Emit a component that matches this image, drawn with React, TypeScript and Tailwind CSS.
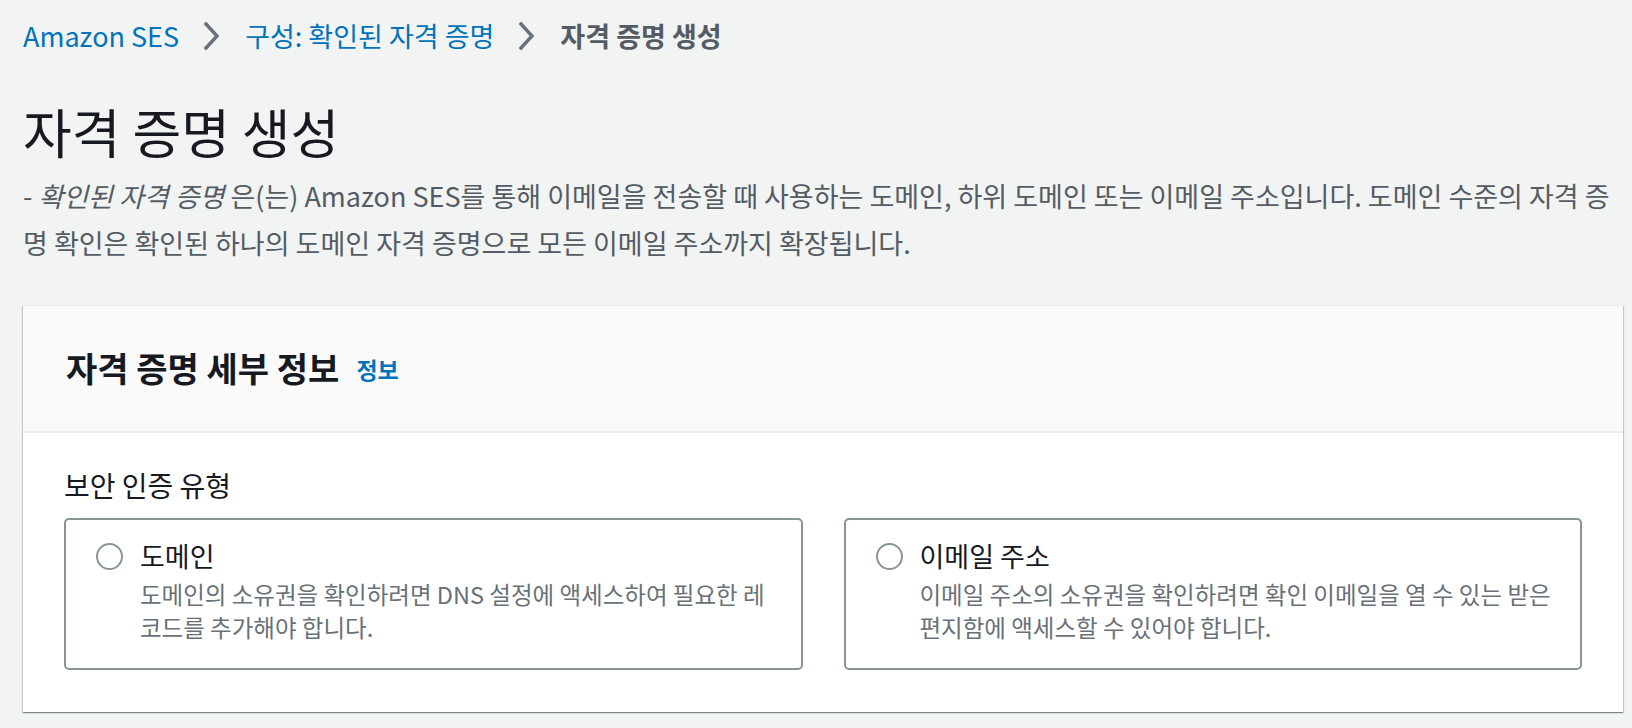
import React from "react";

const Chevron = () => (
  <svg
    width="18"
    height="30"
    viewBox="0 0 18 30"
    fill="none"
    stroke="#687078"
    strokeWidth="3.4"
    strokeLinecap="square"
    className="mx-[24px]"
  >
    <polyline points="3,3 14,15 3,27" />
  </svg>
);

type TileProps = {
  label: string;
  lines: string[];
};

const RadioTile = ({ label, lines }: TileProps) => (
  <div className="flex-1 rounded-[5px] border-2 border-[#879596] bg-white pl-[30px] pt-[21px] h-[152px]">
    <div className="flex items-center gap-[17px]">
      <span className="block h-[27px] w-[27px] rounded-full border-2 border-[#879596] bg-white" />
      <span className="text-[27px] leading-[30px] text-[#16191f]">{label}</span>
    </div>
    <div className="mt-[7px] pl-[44px] text-[23.5px] leading-[33px] text-[#687078] whitespace-nowrap">
      {lines.map((l) => (
        <div key={l}>{l}</div>
      ))}
    </div>
  </div>
);

export default function App() {
  return (
    <div className="min-h-screen bg-[#f2f3f3] pl-[23px] pr-[9px] pt-[18px] font-['Noto_Sans_CJK_KR',sans-serif]">
      <nav className="flex h-[36px] items-center text-[27px]">
        <span className="text-[#0073bb]">Amazon SES</span>
        <Chevron />
        <span className="text-[#0073bb]">구성: 확인된 자격 증명</span>
        <Chevron />
        <span className="font-bold text-[#545b64]">자격 증명 생성</span>
      </nav>

      <h1 className="mt-[47px] text-[53px] leading-[60px] text-[#16191f]">자격 증명 생성</h1>

      <p className="mt-[11px] text-[27px] leading-[47px] text-[#545b64] whitespace-nowrap">
        - <i>확인된 자격 증명</i> 은(는) Amazon SES를 통해 이메일을 전송할 때 사용하는 도메인, 하위 도메인 또는 이메일 주소입니다. 도메인 수준의 자격 증
        <br />
        명 확인은 확인된 하나의 도메인 자격 증명으로 모든 이메일 주소까지 확장됩니다.
      </p>

      <section className="mt-[39px] border-t border-[#eaeded] bg-white shadow-[0_1px_1px_0_rgba(0,28,36,0.3),1px_1px_1px_0_rgba(0,28,36,0.15),-1px_1px_1px_0_rgba(0,28,36,0.15)]">
        <header className="flex h-[127px] items-center border-b-2 border-[#eaeded] bg-[#fafafa] px-[43px] pb-[2px]">
          <h2 className="text-[34px] font-bold text-[#16191f]">자격 증명 세부 정보</h2>
          <span className="ml-[17px] mt-[4px] text-[23px] font-bold text-[#0073bb]">정보</span>
        </header>
        <div className="px-[41px] pt-[36px] pb-[42px]">
          <div className="text-[28px] leading-[32px] text-[#16191f]">보안 인증 유형</div>
          <div className="mt-[17px] flex gap-[41px]">
            <RadioTile
              label="도메인"
              lines={[
                "도메인의 소유권을 확인하려면 DNS 설정에 액세스하여 필요한 레",
                "코드를 추가해야 합니다.",
              ]}
            />
            <RadioTile
              label="이메일 주소"
              lines={[
                "이메일 주소의 소유권을 확인하려면 확인 이메일을 열 수 있는 받은",
                "편지함에 액세스할 수 있어야 합니다.",
              ]}
            />
          </div>
        </div>
      </section>
    </div>
  );
}
